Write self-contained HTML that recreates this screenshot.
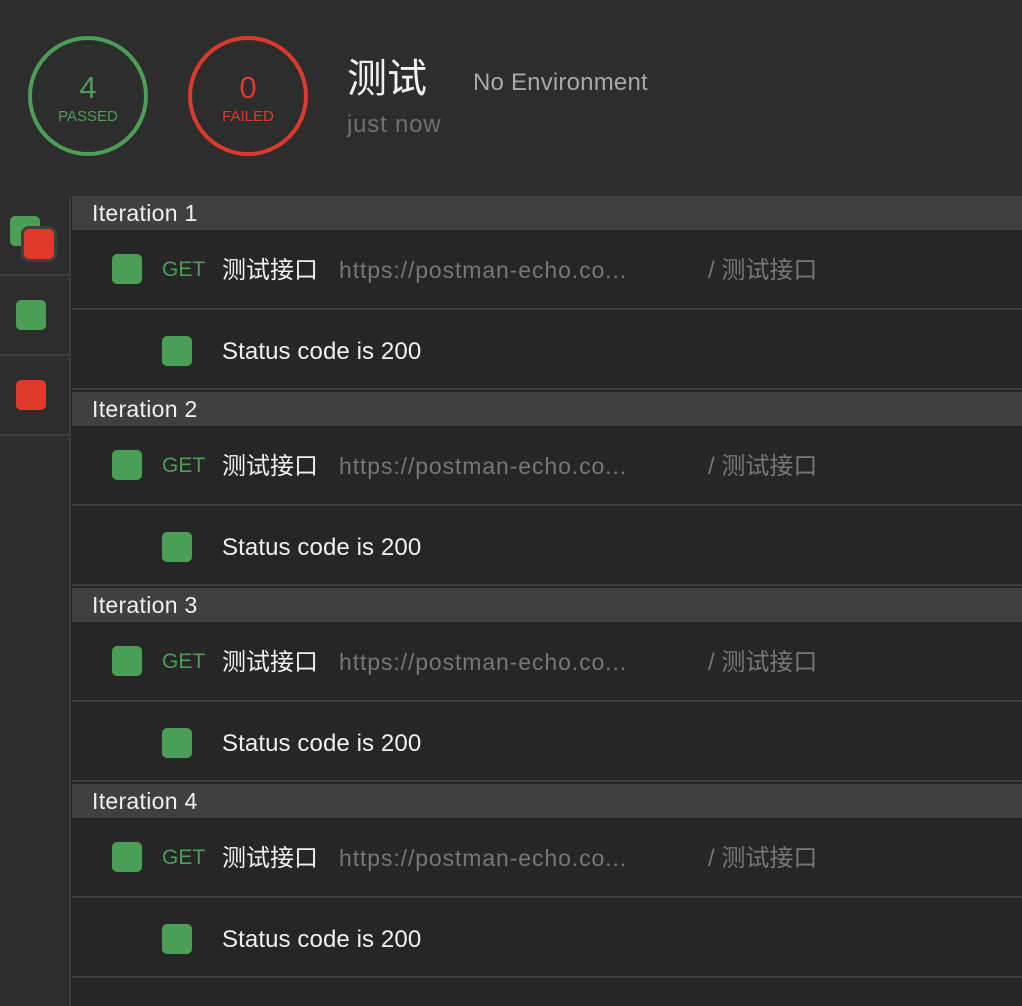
<!DOCTYPE html>
<html><head><meta charset="utf-8"><style>
*{margin:0;padding:0;box-sizing:border-box}
body{width:1022px;height:1006px;background:#262626;position:relative;overflow:hidden;font-family:"Liberation Sans","Noto Sans CJK SC",sans-serif;color:#e8e8e8}
.a{position:absolute}
.hdr{left:0;top:0;width:1022px;height:196px;background:#2d2d2d}
.side{left:0;top:196px;width:71px;height:810px;background:#2d2d2d;border-right:2px solid #3c3c3c}
.circ{width:120px;height:120px;border-radius:50%;border:4px solid;text-align:center}
.sq{width:30px;height:30px;border-radius:5px;background:#4a9e55}
.red{background:#dd3a2b}
.it{left:72px;width:950px;height:34px;background:#404040;font-size:23px;letter-spacing:0.3px;padding-left:20px;line-height:34px;color:#f0f0f0}
.line{left:72px;width:950px;height:2px;background:#3e3e3e}
.t{font-size:22px;white-space:nowrap;height:30px;line-height:30px}
</style></head><body>
<div class="a hdr"></div>
<div class="a circ" style="left:28px;top:36px;border-color:#4a9e55;color:#4a9e55"><div style="font-size:31px;margin-top:32px;line-height:32px">4</div><div style="font-size:15px;margin-top:4px">PASSED</div></div>
<div class="a circ" style="left:188px;top:36px;border-color:#dd3a2b;color:#dd3a2b"><div style="font-size:31px;margin-top:32px;line-height:32px">0</div><div style="font-size:15px;margin-top:4px">FAILED</div></div>
<div class="a" style="left:347px;top:56px;font-size:40px;color:#f2f2f2;line-height:46px">测试</div>
<div class="a" style="left:473px;top:69px;font-size:24px;letter-spacing:0.2px;color:#a8a8a8">No Environment</div>
<div class="a" style="left:347px;top:111px;font-size:24px;letter-spacing:0.8px;color:#707070">just now</div>
<div class="a side"></div>
<div class="a" style="left:0;top:274px;width:70px;height:2px;background:#3c3c3c"></div>
<div class="a" style="left:0;top:354px;width:70px;height:2px;background:#3c3c3c"></div>
<div class="a" style="left:0;top:434px;width:70px;height:2px;background:#3c3c3c"></div>
<div class="a sq" style="left:10px;top:216px"></div>
<div class="a sq red" style="left:21px;top:226px;width:36px;height:36px;border:3px solid #3f3f3f;border-radius:8px"></div>
<div class="a sq" style="left:16px;top:300px"></div>
<div class="a sq red" style="left:16px;top:380px"></div>

<div id="c"></div>
<script>
var h='';
for(var k=0;k<4;k++){var y=196+196*k;
h+='<div class="a it" style="top:'+y+'px">Iteration '+(k+1)+'</div>';
h+='<div class="a sq" style="left:112px;top:'+(y+58)+'px"></div>';
h+='<div class="a t" style="left:162px;top:'+(y+59)+'px;color:#4a9e55;font-size:21px">GET</div>';
h+='<div class="a t" style="left:222px;top:'+(y+60)+'px;color:#f0f0f0;font-size:24px">测试接口</div>';
h+='<div class="a t" style="left:339px;top:'+(y+59)+'px;color:#777;font-size:23px;letter-spacing:0.9px">https://postman-echo.co...</div>';
h+='<div class="a t" style="left:708px;top:'+(y+60)+'px;color:#777;font-size:24px">/ 测试接口</div>';
h+='<div class="a line" style="top:'+(y+112)+'px"></div>';
h+='<div class="a sq" style="left:162px;top:'+(y+140)+'px"></div>';
h+='<div class="a t" style="left:222px;top:'+(y+141)+'px;color:#f0f0f0;font-size:24px;letter-spacing:0.1px">Status code is 200</div>';
h+='<div class="a line" style="top:'+(y+192)+'px"></div>';}
document.getElementById('c').innerHTML=h;
</script>
</body></html>
